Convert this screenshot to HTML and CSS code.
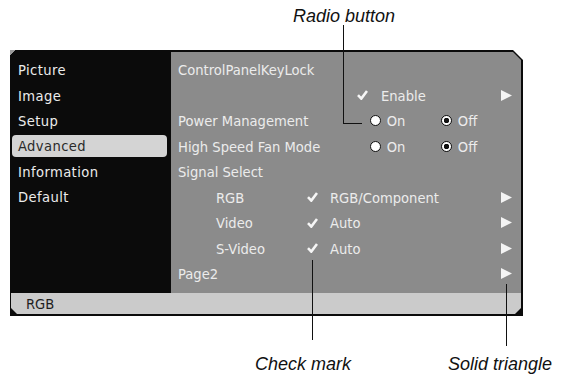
FILE: index.html
```html
<!DOCTYPE html>
<html lang="en">
  <head>
    <meta charset="UTF-8" />
    <meta name="viewport" content="width=device-width, initial-scale=1.0" />
    <title>Advanced Menu</title>
    <link rel="stylesheet" href="styles.css">
  </head>
  <body>
    <div class="page">
      <div class="top-caption"><span class="caption">Radio button</span></div>

      <div class="osd">
        <ul class="menu">
          <li>Picture</li>
          <li>Image</li>
          <li>Setup</li>
          <li class="active">Advanced</li>
          <li>Information</li>
          <li>Default</li>
        </ul>

        <div class="panel">
          <div class="row"><span>ControlPanelKeyLock</span></div>
          <div class="row enable">
            <span class="check"><svg width="11" height="10" viewBox="0 0 11 10"><path d="M1 5.2 L4.3 8.6 L10 1" /></svg></span>
            <span>Enable</span>
            <span class="arrow"><svg width="11" height="11" viewBox="0 0 11 11"><polygon points="0,0 11,5.5 0,11" /></svg></span>
          </div>
          <div class="row">
            <span class="radio-label">Power Management</span>
            <span class="radio"><i class="dot"></i>On</span>
            <span class="radio"><i class="dot on"></i>Off</span>
          </div>
          <div class="row">
            <span class="radio-label">High Speed Fan Mode</span>
            <span class="radio"><i class="dot"></i>On</span>
            <span class="radio"><i class="dot on"></i>Off</span>
          </div>
          <div class="row"><span>Signal Select</span></div>
          <div class="row sub">
            <span class="label">RGB</span>
            <span class="check"><svg width="11" height="10" viewBox="0 0 11 10"><path d="M1 5.2 L4.3 8.6 L10 1" /></svg></span>
            <span>RGB/Component</span>
            <span class="arrow"><svg width="11" height="11" viewBox="0 0 11 11"><polygon points="0,0 11,5.5 0,11" /></svg></span>
          </div>
          <div class="row sub">
            <span class="label">Video</span>
            <span class="check"><svg width="11" height="10" viewBox="0 0 11 10"><path d="M1 5.2 L4.3 8.6 L10 1" /></svg></span>
            <span>Auto</span>
            <span class="arrow"><svg width="11" height="11" viewBox="0 0 11 11"><polygon points="0,0 11,5.5 0,11" /></svg></span>
          </div>
          <div class="row sub">
            <span class="label">S-Video</span>
            <span class="check"><svg width="11" height="10" viewBox="0 0 11 10"><path d="M1 5.2 L4.3 8.6 L10 1" /></svg></span>
            <span>Auto</span>
            <span class="arrow"><svg width="11" height="11" viewBox="0 0 11 11"><polygon points="0,0 11,5.5 0,11" /></svg></span>
          </div>
          <div class="row">
            <span>Page2</span>
            <span class="arrow"><svg width="11" height="11" viewBox="0 0 11 11"><polygon points="0,0 11,5.5 0,11" /></svg></span>
          </div>
        </div>

        <div class="status">RGB</div>
      </div>

      <div class="bottom-captions">
        <span class="caption first">Check mark</span>
        <span class="caption">Solid triangle</span>
      </div>

      <!-- callout leaders -->
      <div class="leader radio-v"></div>
      <div class="leader radio-h"></div>
      <div class="leader check-v"></div>
      <div class="leader tri-v"></div>
    </div>
  </body>
</html>
```

FILE: styles.css
```css
body {
  margin: 0;
  background: #fff;
}
.page {
  position: relative;
  width: 568px;
  height: 377px;
  overflow: hidden;
}
.caption {
  font-family: "Liberation Sans", Arial, sans-serif;
  font-style: italic;
  font-size: 18px;
  line-height: 20px;
  color: #111;
}
.top-caption {
  height: 50px;
  box-sizing: border-box;
  padding: 6px 0 0 293px;
}
.bottom-captions {
  display: flex;
  margin-top: 38px;
  padding-left: 255px;
}
.bottom-captions .first {
  width: 193px;
}

/* on-screen menu */
.osd {
  position: relative;
  margin-left: 10px;
  width: 513px;
  height: 266px;
  box-sizing: border-box;
  padding: 2px 2px 2px 1px;
  background: #0b0b0b;
  display: grid;
  grid-template-columns: 160px 350px;
  grid-template-rows: 241px 21px;
  font-family: "Liberation Sans Narrow", "DejaVu Sans Condensed", "Liberation Sans", sans-serif;
  font-size: 14.6px;
  color: #ececec;
  clip-path: polygon(0 0, calc(100% - 10px) 0, 100% 10px, 100% 100%, 0 100%);
}
.osd::before {
  content: "";
  position: absolute;
  top: 0;
  left: 0;
  width: 6px;
  height: 6px;
  background: linear-gradient(135deg, #9a9a9a 50%, transparent 50%);
}
.menu {
  list-style: none;
  margin: 0;
  padding: 5px 0 0;
  letter-spacing: 0.4px;
}
.menu li {
  height: 25.4px;
  display: flex;
  align-items: center;
  padding-left: 7px;
}
.menu li.active {
  height: 22px;
  margin: 1.7px 4px 1.7px 1px;
  padding-left: 6px;
  border-radius: 4px;
  background: #d4d4d4;
  color: #2a2a2a;
}
.panel {
  background: #8b8b8b;
  padding: 5px 9px 0 7px;
  clip-path: polygon(0 0, calc(100% - 8px) 0, 100% 8px, 100% 100%, 0 100%);
}
.row {
  height: 25.5px;
  display: flex;
  align-items: center;
}
.arrow {
  margin-left: auto;
  display: flex;
}
.arrow polygon {
  fill: #f4f4f4;
}
.check {
  width: 23px;
  display: flex;
}
.check path {
  fill: none;
  stroke: #f6f6f6;
  stroke-width: 2.6;
}
.enable .check {
  margin-left: 179px;
  width: 24px;
}
.sub .label {
  margin-left: 38px;
  width: 91px;
}
.radio-label {
  width: 194px;
}
.radio {
  width: 72px;
  display: flex;
  align-items: center;
  gap: 6px;
}
.dot {
  width: 11px;
  height: 11px;
  box-sizing: border-box;
  border-radius: 50%;
  border: 1px solid #111;
  background: #fff;
}
.dot.on {
  background: radial-gradient(circle, #111 0 2.5px, #fff 3px);
}
.status {
  grid-column: 1 / -1;
  display: flex;
  align-items: center;
  padding-left: 15px;
  background: #cbcbcb;
  color: #1e1e1e;
  clip-path: polygon(0 0, 100% 0, 100% calc(100% - 6px), calc(100% - 6px) 100%, 6px 100%, 0 calc(100% - 6px));
}

/* leader lines for the captions */
.leader {
  position: absolute;
  background: #111;
}
.radio-v {
  left: 343px;
  top: 25px;
  width: 1px;
  height: 99px;
}
.radio-h {
  left: 343px;
  top: 123px;
  width: 19px;
  height: 1px;
}
.check-v {
  left: 312px;
  top: 260px;
  width: 1px;
  height: 80px;
}
.tri-v {
  left: 506px;
  top: 284px;
  width: 1px;
  height: 62px;
}
```
